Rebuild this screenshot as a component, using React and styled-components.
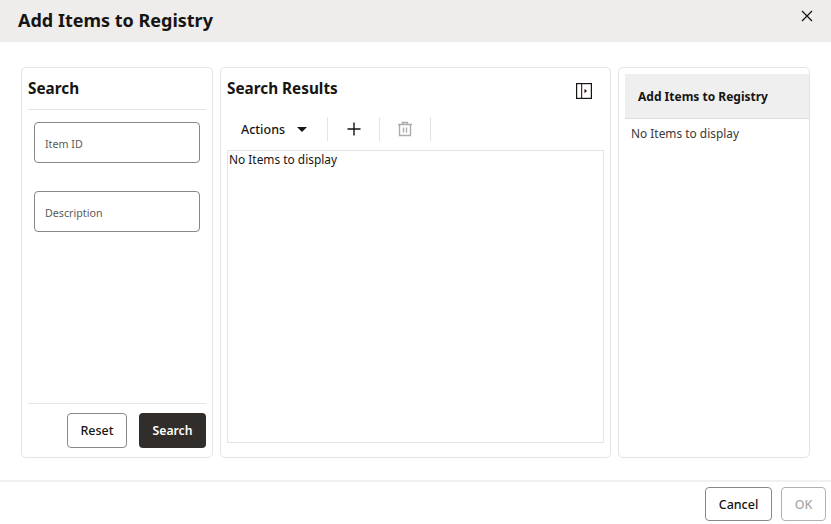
import React from 'react';
import styled, { createGlobalStyle } from 'styled-components';

const GlobalStyle = createGlobalStyle`
    html, body {
        margin: 0;
        padding: 0;
        background: #fff;
    }
    body {
        font-family: "Noto Sans", "Open Sans", sans-serif;
        color: #161513;
    }
`

function App() {
    return (
        <Dialog>
            <GlobalStyle/>
            <Header>
                <Title>Add Items to Registry</Title>
                <CloseButton aria-label="Close">
                    <svg width="12" height="12" viewBox="0 0 12 12">
                        <path d="M1 1l10 10M11 1L1 11" stroke="#161513" strokeWidth="1.3" fill="none"/>
                    </svg>
                </CloseButton>
            </Header>
            <Body>
                <SearchPanel>
                    <PanelTitle>Search</PanelTitle>
                    <Fields>
                        <Field>Item ID</Field>
                        <Field>Description</Field>
                    </Fields>
                    <PanelFooter>
                        <OutlineButton $width={60} $height={35}>Reset</OutlineButton>
                        <PrimaryButton>Search</PrimaryButton>
                    </PanelFooter>
                </SearchPanel>
                <ResultsPanel>
                    <ResultsHead>
                        <ResultsTitle>Search Results</ResultsTitle>
                        <PanelIcon width="16" height="16" viewBox="0 0 16 16">
                            <rect x="0.6" y="0.6" width="14.8" height="14.8" fill="none" stroke="#161513" strokeWidth="1.2"/>
                            <path d="M5.6 1v14" stroke="#6b1a12" strokeWidth="1.2"/>
                            <path d="M8.5 5.7L11 8l-2.5 2.3z" fill="#161513"/>
                        </PanelIcon>
                    </ResultsHead>
                    <Toolbar>
                        <ActionsGroup>
                            Actions
                            <Caret/>
                        </ActionsGroup>
                        <ToolGroup $width={52}>
                            <svg width="14" height="14" viewBox="0 0 14 14">
                                <path d="M7 0.5v13M0.5 7h13" stroke="#161513" strokeWidth="1.4" fill="none"/>
                            </svg>
                        </ToolGroup>
                        <ToolGroup $width={51}>
                            <svg width="16" height="16" viewBox="0 0 16 16" fill="none" stroke="#aeacaa" strokeWidth="1.4">
                                <path d="M1 3.5h14M5.5 3.5v-2h5v2M2.5 3.5v11h11v-11M6.5 6.5v5M9.5 6.5v5"/>
                            </svg>
                        </ToolGroup>
                    </Toolbar>
                    <ResultsTable>No Items to display</ResultsTable>
                </ResultsPanel>
                <RegistryPanel>
                    <RegistryHead>Add Items to Registry</RegistryHead>
                    <RegistryEmpty>No Items to display</RegistryEmpty>
                </RegistryPanel>
            </Body>
            <Footer>
                <FooterButton $width={67} $height={34}>Cancel</FooterButton>
                <FooterButton $width={45} $height={34} $disabled>OK</FooterButton>
            </Footer>
        </Dialog>
    )
}

export default App

const Dialog = styled.div`
    width: 831px;
    height: 524px;
    display: flex;
    flex-direction: column;
    overflow: hidden;
`
const Header = styled.div`
    height: 42px;
    flex: none;
    background-color: #efedeb;
    display: flex;
    align-items: flex-start;
    justify-content: space-between;
    padding: 0 18px;
    box-sizing: border-box;
`
const Title = styled.h1`
    margin: 0;
    font-size: 18px;
    font-weight: 700;
    line-height: 40px;
`
const CloseButton = styled.div`
    display: flex;
    margin-top: 10px;
`
const Body = styled.div`
    height: 391px;
    margin-top: 25px;
    padding-left: 21px;
    display: flex;
    gap: 7px;
`
const Panel = styled.div`
    box-sizing: border-box;
    height: 100%;
    border: 1px solid #e5e4e2;
    border-radius: 5px;
    display: flex;
    flex-direction: column;
`
const SearchPanel = styled(Panel)`
    width: 192px;
    padding: 0 6px;
`
const PanelTitle = styled.h2`
    margin: 0;
    height: 42px;
    box-sizing: border-box;
    border-bottom: 1px solid #e5e4e2;
    font-size: 15.3px;
    font-weight: 700;
    line-height: 40px;
`
const Fields = styled.div`
    flex: 1;
    padding: 12px 6px 0;
    display: flex;
    flex-direction: column;
    gap: 28px;
`
const Field = styled.div`
    height: 41px;
    box-sizing: border-box;
    border: 1px solid #8a8886;
    border-radius: 4px;
    padding: 13px 10px 0;
    font-size: 10.7px;
    line-height: 17px;
    color: #5c5a58;
`
const PanelFooter = styled.div`
    height: 54px;
    box-sizing: border-box;
    border-top: 1px solid #e5e4e2;
    padding-top: 9px;
    display: flex;
    justify-content: flex-end;
    gap: 12px;
`
const OutlineButton = styled.div`
    box-sizing: border-box;
    width: ${props => props.$width}px;
    height: ${props => props.$height}px;
    padding-bottom: 1px;
    border: 1px solid ${props => props.$disabled ? '#b3b1ae' : '#8a8886'};
    border-radius: 4px;
    display: flex;
    align-items: center;
    justify-content: center;
    font-size: 12.5px;
    font-weight: 500;
    color: ${props => props.$disabled ? '#a9a7a4' : '#161513'};
`
const FooterButton = styled(OutlineButton)`
    padding-bottom: 0;
`
const PrimaryButton = styled.div`
    width: 67px;
    height: 35px;
    padding-bottom: 1px;
    box-sizing: border-box;
    border-radius: 4px;
    background-color: #312d2a;
    color: #fff;
    display: flex;
    align-items: center;
    justify-content: center;
    font-size: 12.2px;
    font-weight: 600;
`
const ResultsPanel = styled(Panel)`
    width: 391px;
    padding: 0 6px 14px;
`
const ResultsHead = styled.div`
    height: 42px;
    flex: none;
    display: flex;
    align-items: flex-start;
    justify-content: space-between;
    padding-right: 12px;
`
const ResultsTitle = styled.h2`
    margin: 0;
    font-size: 15.3px;
    font-weight: 700;
    line-height: 40px;
`
const PanelIcon = styled.svg`
    margin-top: 15px;
`
const Toolbar = styled.div`
    height: 24px;
    margin-top: 7px;
    flex: none;
    display: flex;
    align-items: center;
`
const ActionsGroup = styled.div`
    width: 101px;
    height: 24px;
    box-sizing: border-box;
    padding-left: 14px;
    border-right: 1px solid #e5e4e2;
    display: flex;
    align-items: center;
    gap: 12px;
    font-size: 12.5px;
    font-weight: 500;
`
const Caret = styled.span`
    width: 0;
    height: 0;
    margin-top: 1px;
    border-left: 5px solid transparent;
    border-right: 5px solid transparent;
    border-top: 5px solid #161513;
`
const ToolGroup = styled.div`
    box-sizing: border-box;
    width: ${props => props.$width}px;
    height: 24px;
    border-right: 1px solid #e5e4e2;
    display: flex;
    align-items: center;
    justify-content: center;
`
const ResultsTable = styled.div`
    flex: 1;
    margin-top: 9px;
    border: 1px solid #e5e4e2;
    padding-left: 1px;
    font-size: 11.9px;
    line-height: 16px;
`
const RegistryPanel = styled(Panel)`
    width: 192px;
    padding-top: 6px;
    padding-left: 6px;
`
const RegistryHead = styled.div`
    height: 45px;
    flex: none;
    box-sizing: border-box;
    background-color: #efefef;
    border-bottom: 1px solid #dedede;
    padding-left: 13px;
    font-size: 12px;
    font-weight: 700;
    line-height: 45px;
`
const RegistryEmpty = styled.div`
    padding: 6px 0 0 6px;
    font-size: 11.9px;
    line-height: 16px;
    color: #3a3836;
`
const Footer = styled.div`
    margin-top: 22px;
    flex: 1;
    border-top: 2px solid #f1f0ee;
    box-sizing: border-box;
    padding: 5px 5px 0 0;
    display: flex;
    justify-content: flex-end;
    gap: 9px;
`
